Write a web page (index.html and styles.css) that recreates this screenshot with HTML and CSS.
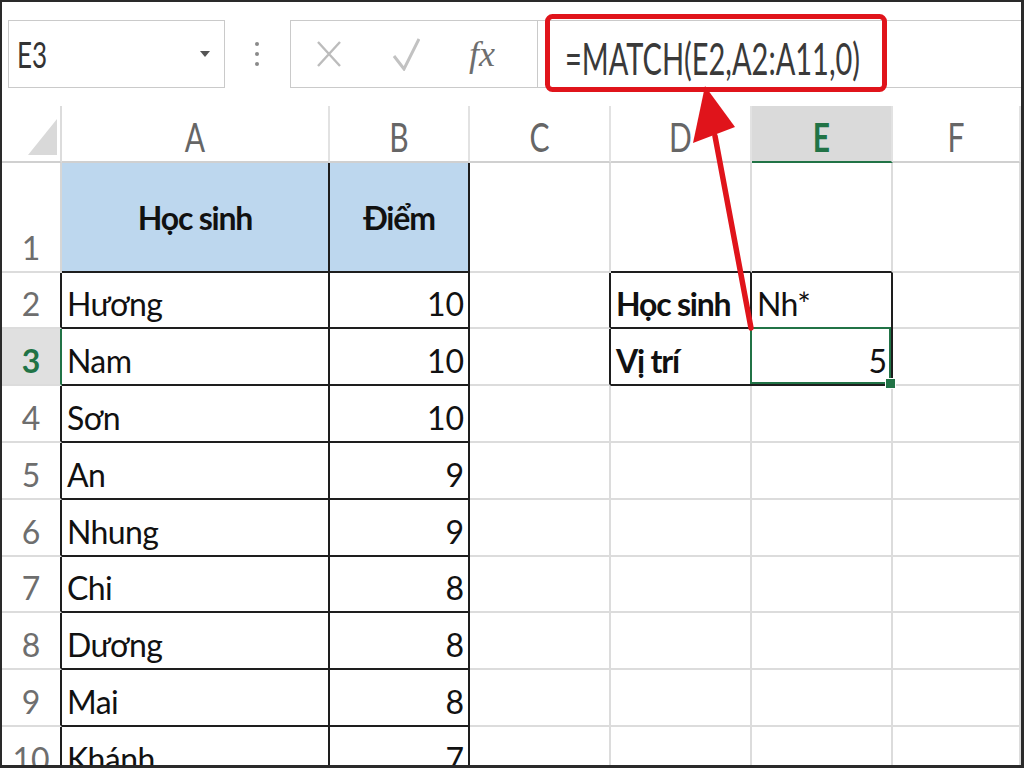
FILE: index.html
```html
<!DOCTYPE html>
<html lang="vi">
<head>
    <meta charset="UTF-8">
    <title>MATCH - Excel</title>
    <link rel="stylesheet" href="styles.css">
</head>
<body>
    <div class="screen">
        <!-- Thanh công thức -->
        <div class="formula-bar">
            <div class="name-box">
                <span class="name-text">E3</span>
                <span class="caret"></span>
            </div>
            <div class="dots"><i></i><i></i><i></i></div>
            <div class="fx-group">
                <div class="fx-buttons">
                    <svg class="icon-cancel" width="24" height="26" viewBox="0 0 24 26">
                        <path d="M1 1 L23 25 M23 1 L1 25" fill="none" stroke="#bcbcbc" stroke-width="2.4"/>
                    </svg>
                    <svg class="icon-enter" width="28" height="33" viewBox="0 0 28 33">
                        <path d="M2 18 L12 31 L27 1" fill="none" stroke="#c2c2c2" stroke-width="3"/>
                    </svg>
                    <span class="fx">fx</span>
                </div>
                <div class="formula-input">
                    <span class="formula-text">=MATCH(E2,A2:A11,0)</span>
                </div>
            </div>
        </div>

        <!-- Bảng tính -->
        <div class="sheet">
            <div class="corner"><span class="corner-tri"></span></div>
            <div class="col-head"><span>A</span></div>
            <div class="col-head"><span>B</span></div>
            <div class="col-head"><span>C</span></div>
            <div class="col-head"><span>D</span></div>
            <div class="col-head active"><span>E</span></div>
            <div class="col-head"><span>F</span></div>

            <div class="row-head first">1</div>
            <div class="cell tbl title">Học sinh</div>
            <div class="cell tbl title">Điểm</div>
            <div class="cell"></div>
            <div class="cell box-top"></div>
            <div class="cell box-top"></div>
            <div class="cell"></div>

            <div class="row-head">2</div>
            <div class="cell tbl">Hương</div>
            <div class="cell tbl num">10</div>
            <div class="cell box-left"></div>
            <div class="cell box bold">Học sinh</div>
            <div class="cell box">Nh*</div>
            <div class="cell"></div>

            <div class="row-head active">3</div>
            <div class="cell tbl">Nam</div>
            <div class="cell tbl num">10</div>
            <div class="cell box-left"></div>
            <div class="cell box bold">Vị trí</div>
            <div class="cell box num selected">5</div>
            <div class="cell"></div>

            <div class="row-head">4</div>
            <div class="cell tbl">Sơn</div>
            <div class="cell tbl num">10</div>
            <div class="cell"></div>
            <div class="cell"></div>
            <div class="cell"></div>
            <div class="cell"></div>

            <div class="row-head">5</div>
            <div class="cell tbl">An</div>
            <div class="cell tbl num">9</div>
            <div class="cell"></div>
            <div class="cell"></div>
            <div class="cell"></div>
            <div class="cell"></div>

            <div class="row-head">6</div>
            <div class="cell tbl">Nhung</div>
            <div class="cell tbl num">9</div>
            <div class="cell"></div>
            <div class="cell"></div>
            <div class="cell"></div>
            <div class="cell"></div>

            <div class="row-head">7</div>
            <div class="cell tbl">Chi</div>
            <div class="cell tbl num">8</div>
            <div class="cell"></div>
            <div class="cell"></div>
            <div class="cell"></div>
            <div class="cell"></div>

            <div class="row-head">8</div>
            <div class="cell tbl">Dương</div>
            <div class="cell tbl num">8</div>
            <div class="cell"></div>
            <div class="cell"></div>
            <div class="cell"></div>
            <div class="cell"></div>

            <div class="row-head">9</div>
            <div class="cell tbl">Mai</div>
            <div class="cell tbl num">8</div>
            <div class="cell"></div>
            <div class="cell"></div>
            <div class="cell"></div>
            <div class="cell"></div>

            <div class="row-head">10</div>
            <div class="cell tbl">Khánh</div>
            <div class="cell tbl num">7</div>
            <div class="cell"></div>
            <div class="cell"></div>
            <div class="cell"></div>
            <div class="cell"></div>
        </div>

        <!-- Khung đỏ và mũi tên chú thích -->
        <svg class="callout" width="1024" height="768" viewBox="0 0 1024 768">
            <rect x="547.5" y="16.5" width="337" height="73" rx="5" fill="none" stroke="#e0141b" stroke-width="5"/>
            <line x1="751" y1="328" x2="715" y2="136" stroke="#e0141b" stroke-width="5.5" stroke-linecap="round"/>
            <polygon points="705,86 693,143 735,127" fill="#e0141b"/>
        </svg>
    </div>
</body>
</html>
```

FILE: styles.css
```css
* {
    margin: 0;
    padding: 0;
    box-sizing: border-box;
}
body {
    font-family: Lato, 'Noto Sans', sans-serif;
    background: #fff;
}
.screen {
    position: relative;
    width: 1024px;
    height: 768px;
    border: solid #2a2a2a;
    border-width: 2px 3px 3px 2px;
    overflow: hidden;
    background: #fff;
}

/* Thanh công thức */
.formula-bar {
    display: flex;
    align-items: flex-start;
    height: 104px;
    padding: 18px 0 0 6px;
}
.name-box {
    width: 217px;
    height: 68px;
    border: 1px solid #cacaca;
    display: flex;
    align-items: center;
    justify-content: space-between;
    padding: 0 14px 0 8px;
}
.name-text {
    display: inline-block;
    font-size: 26px;
    color: #333;
    transform: scaleY(1.4);
}
.caret {
    width: 0;
    height: 0;
    border-left: 5px solid transparent;
    border-right: 5px solid transparent;
    border-top: 6px solid #555;
}
.dots {
    display: flex;
    flex-direction: column;
    gap: 6px;
    margin: 22px 31px 0 30px;
}
.dots i {
    width: 4px;
    height: 4px;
    border-radius: 50%;
    background: #8a8a8a;
}
.fx-group {
    flex: 1;
    display: flex;
    height: 68px;
    border: 1px solid #cacaca;
    border-right: none;
}
.fx-buttons {
    width: 247px;
    display: flex;
    align-items: center;
    gap: 52px;
    padding-left: 26px;
    border-right: 1px solid #cacaca;
}
.icon-enter {
    margin-left: -1px;
}
.fx {
    margin-left: -3px;
    font-family: 'Liberation Serif', serif;
    font-style: italic;
    font-size: 36px;
    color: #6e6e6e;
}
.formula-input {
    flex: 1;
    display: flex;
    align-items: center;
    padding: 8px 0 0 27px;
}
.formula-text {
    display: inline-block;
    font-size: 29px;
    line-height: 36px;
    color: #3a3a3a;
    transform: scaleY(1.5);
}

/* Lưới bảng tính */
.sheet {
    display: grid;
    grid-template-columns: 60px 268px 140px 141px 141px 141px 1fr;
    grid-template-rows: 57px 110px 56px 57px 57px 57px 57px 56px 57px 57px 57px;
    font-size: 32px;
    color: #111;
}
.corner {
    display: flex;
    justify-content: flex-end;
    align-items: flex-end;
    padding: 0 3px 6px 0;
    border-right: 2px solid #dcdcdc;
    border-bottom: 2px solid #d0d0d0;
}
.corner-tri {
    width: 29px;
    height: 36px;
    background: #d9d9d9;
    clip-path: polygon(100% 0, 100% 100%, 0 100%);
}
.col-head {
    display: flex;
    justify-content: center;
    align-items: center;
    padding-top: 4px;
    border-right: 2px solid #e2e2e2;
    border-bottom: 2px solid #d0d0d0;
    font-size: 30px;
    line-height: 40px;
    color: #666;
}
.col-head span {
    display: inline-block;
    transform: scaleY(1.35);
}
.col-head.active {
    background: #dadada;
    color: #217346;
    font-weight: 700;
    border-bottom-color: #217346;
}
.row-head {
    display: flex;
    justify-content: center;
    align-items: flex-end;
    padding-bottom: 3px;
    line-height: 40px;
    color: #6e6e6e;
    border-right: 2px solid #1e1e1e;
    border-bottom: 2px solid #dcdcdc;
}
.row-head.first {
    border-right-color: #d6d6d6;
}
.row-head.active {
    background: #e0e0e0;
    color: #217346;
    font-weight: 700;
    border-right-color: #217346;
}
.cell {
    display: flex;
    align-items: flex-end;
    padding: 0 5px 3px 5px;
    line-height: 40px;
    letter-spacing: -0.6px;
    white-space: nowrap;
    border-right: 2px solid #dcdcdc;
    border-bottom: 2px solid #dcdcdc;
}
.cell.tbl,
.cell.box {
    border-right-color: #1e1e1e;
    border-bottom-color: #1e1e1e;
}
.cell.box-top {
    border-bottom-color: #1e1e1e;
}
.cell.box-left {
    border-right-color: #1e1e1e;
}
.cell.title {
    justify-content: center;
    align-items: center;
    padding-top: 4px;
    background: #bdd7ee;
    font-weight: 700;
    letter-spacing: -1.2px;
}
.cell.num {
    justify-content: flex-end;
    padding-right: 4px;
    letter-spacing: 0;
}
.cell.bold {
    font-weight: 700;
    letter-spacing: -1.2px;
}
/* Ô đang chọn E3 */
.cell.selected {
    position: relative;
}
.cell.selected::after {
    content: "";
    position: absolute;
    top: -2px;
    left: -2px;
    right: 0;
    bottom: 0;
    border: 2px solid #217346;
}
.cell.selected::before {
    content: "";
    position: absolute;
    right: -5px;
    bottom: -5px;
    width: 9px;
    height: 9px;
    background: #217346;
    border: 1px solid #fff;
    z-index: 1;
}

/* Chú thích màu đỏ */
.callout {
    position: absolute;
    top: -2px;
    left: -2px;
    pointer-events: none;
}
```
